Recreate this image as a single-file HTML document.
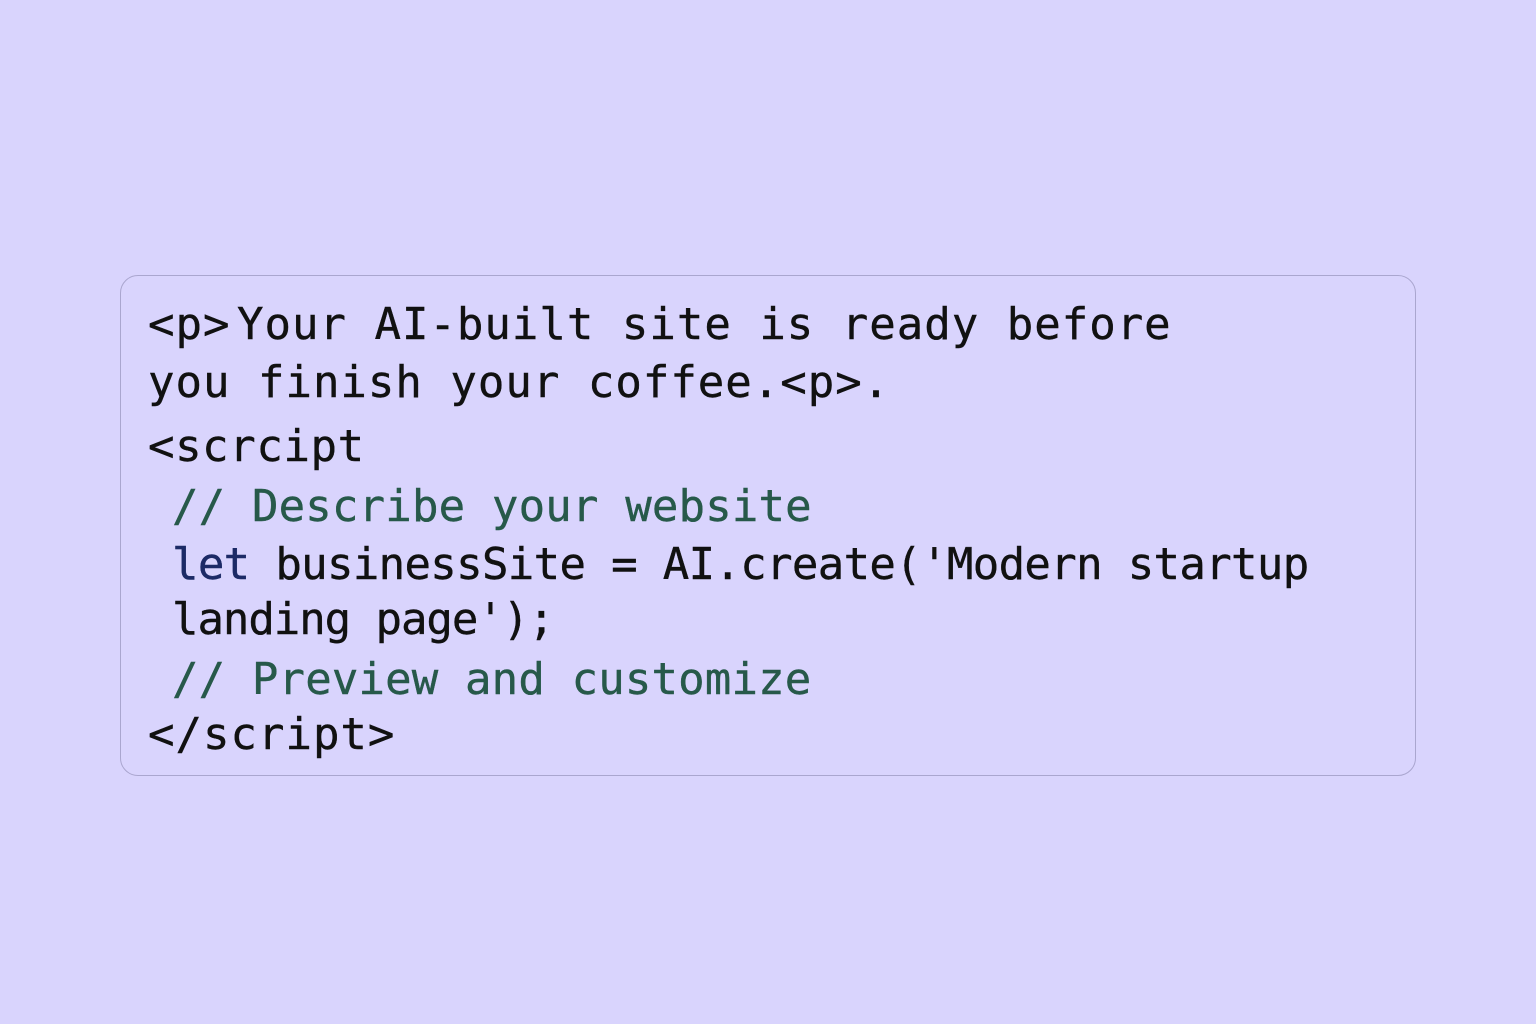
<!DOCTYPE html>
<html><head><style>
html,body{margin:0;padding:0;width:1536px;height:1024px;background:#d9d4fd;overflow:hidden}
.box{position:absolute;left:120px;top:275px;width:1296px;height:501px;border:1px solid #aaa6cf;border-radius:18px;box-sizing:border-box}
.l{position:absolute;font-family:"DejaVu Sans Mono","Liberation Mono",monospace;font-size:44px;line-height:1;white-space:pre;color:#111;-webkit-text-stroke:0.4px currentColor}
.c{color:#27594a}
.k{color:#1c2a66}
</style></head><body>
<div class="box"></div>
<div class="l" style="left:148px;top:303px;letter-spacing:1.0px">&lt;p&gt;</div>
<div class="l" style="left:237px;top:303px;letter-spacing:1.0px">Your AI-built site is ready before</div>
<div class="l" style="left:148px;top:361px;letter-spacing:1.0px">you finish your coffee.&lt;p&gt;.</div>
<div class="l" style="left:148px;top:425px;letter-spacing:0.6px">&lt;scrcipt</div>
<div class="l c" style="left:172px;top:485px;letter-spacing:0.17px">// Describe your website</div>
<div class="l" style="left:172px;top:543px;letter-spacing:-0.66px"><span class="k">let</span> businessSite = AI.create('Modern startup</div>
<div class="l" style="left:172px;top:598px;letter-spacing:-1.05px">landing page');</div>
<div class="l c" style="left:172px;top:658px;letter-spacing:0.15px">// Preview and customize</div>
<div class="l" style="left:148px;top:713px;letter-spacing:1.0px">&lt;/script&gt;</div>
</body></html>
